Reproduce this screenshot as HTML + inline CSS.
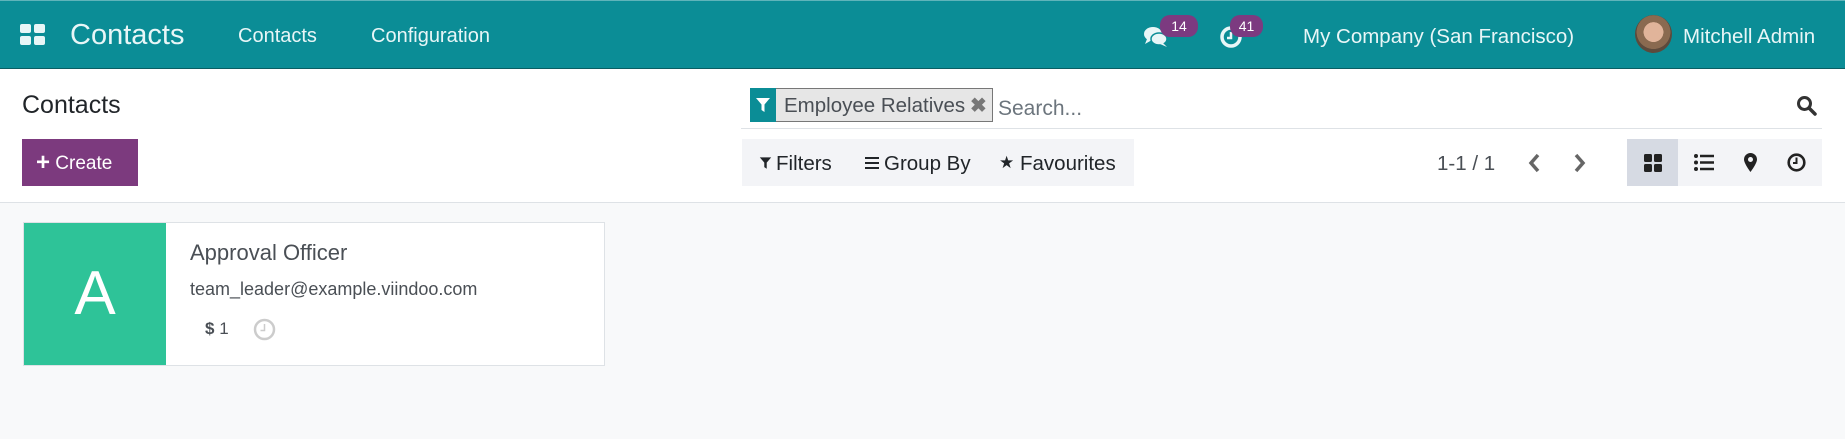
<!DOCTYPE html>
<html><head><meta charset="utf-8"><style>
*{box-sizing:border-box;margin:0;padding:0}
body{width:1845px;height:439px;overflow:hidden;background:#f8f9fa;font-family:"Liberation Sans",sans-serif;position:relative}
.a{position:absolute;white-space:nowrap}
.nav{left:0;top:0;width:1845px;height:69px;background:#0b8d96;border-top:1px solid #5fb4ba;border-bottom:1px solid #0a5e63}
.nt{color:#e8f6f7}
.cp{left:0;top:69px;width:1845px;height:134px;background:#fff;border-bottom:1px solid #dee2e6}
.badge{background:#7c3a80;color:#fff;font-size:14px;border-radius:10px;height:22px;line-height:22px;text-align:center}
</style></head><body>
<div class="a nav"></div>
<svg class="a" style="left:20px;top:24px" width="26" height="21" viewBox="0 0 26 21"><rect x="0" y="0" width="11" height="9" rx="2" fill="#e8f6f7"/><rect x="14" y="0" width="11" height="9" rx="2" fill="#e8f6f7"/><rect x="0" y="12" width="11" height="9" rx="2" fill="#e8f6f7"/><rect x="14" y="12" width="11" height="9" rx="2" fill="#e8f6f7"/></svg>
<div class="a nt" style="left:70px;top:19px;font-size:29px">Contacts</div>
<div class="a nt" style="left:238px;top:25px;font-size:20px">Contacts</div>
<div class="a nt" style="left:371px;top:25px;font-size:20px">Configuration</div>
<svg class="a" style="left:1143px;top:26px" width="26" height="22" viewBox="0 0 26 22"><ellipse cx="10" cy="8" rx="9" ry="7" fill="#e8f6f7"/><path d="M4 13 L2 18 L9 14Z" fill="#e8f6f7"/><ellipse cx="16" cy="13" rx="8" ry="6" fill="#e8f6f7" stroke="#0b8d96" stroke-width="1.5"/><path d="M20 17 L24 21 L17 18Z" fill="#e8f6f7"/></svg>
<div class="a badge" style="left:1160px;top:15px;width:38px">14</div>
<svg class="a" style="left:1219px;top:25px" width="24" height="24" viewBox="0 0 24 24"><circle cx="12" cy="12" r="9" fill="none" stroke="#e8f6f7" stroke-width="3.5"/><path d="M12 7v6h-4" stroke="#e8f6f7" stroke-width="2.5" fill="none"/></svg>
<div class="a badge" style="left:1230px;top:15px;width:33px">41</div>
<div class="a nt" style="left:1303px;top:25px;font-size:20.5px">My Company (San Francisco)</div>
<div class="a" style="left:1635px;top:15px;width:37px;height:38px;border-radius:50%;background:radial-gradient(circle at 50% 45%,#e1b49a 0 35%,#8a6a50 36% 60%,#5c4a3c 61%)"></div>
<div class="a nt" style="left:1683px;top:25px;font-size:20.5px">Mitchell Admin</div>

<div class="a cp"></div>
<div class="a" style="left:22px;top:91px;font-size:25px;color:#212529">Contacts</div>
<div class="a" style="left:22px;top:139px;width:116px;height:47px;background:#7c3a7e;color:#fff;font-size:19px;line-height:47px;padding-left:14px"><b style="font-size:24px;vertical-align:-1px">+</b> Create</div>

<div class="a" style="left:750px;top:88px;width:243px;height:34px;background:#e6e6e6;border:1px solid #777"></div>
<div class="a" style="left:750px;top:88px;width:26px;height:34px;background:#0b8d96"></div>
<svg class="a" style="left:755px;top:97px" width="16" height="16" viewBox="0 0 16 16"><path d="M1 1h14l-5.5 6.5v7.5l-3-2v-5.5z" fill="#fff"/></svg>
<div class="a" style="left:784px;top:94px;font-size:20.5px;color:#4a4f55">Employee Relatives</div>
<div class="a" style="left:970px;top:93px;font-size:20px;color:#777;font-weight:bold">✖</div>
<div class="a" style="left:998px;top:97px;font-size:21px;color:#6c757d">Search...</div>
<div class="a" style="left:741px;top:128px;width:1081px;height:1px;background:#dee2e6"></div>
<svg class="a" style="left:1796px;top:95px" width="21" height="21" viewBox="0 0 21 21"><circle cx="8.5" cy="8.5" r="6" fill="none" stroke="#333" stroke-width="3"/><path d="M13 13l6 6" stroke="#333" stroke-width="3.5" stroke-linecap="round"/></svg>

<div class="a" style="left:742px;top:139px;width:392px;height:47px;background:#f3f4f7"></div>
<svg class="a" style="left:759px;top:156px" width="13" height="14" viewBox="0 0 16 16"><path d="M1 1h14l-5.5 6.5v7.5l-3-2v-5.5z" fill="#212529"/></svg>
<div class="a" style="left:776px;top:152px;font-size:20.5px;color:#212529">Filters</div>
<svg class="a" style="left:865px;top:157px" width="14" height="12" viewBox="0 0 14 12"><path d="M0 1h14M0 6h14M0 11h14" stroke="#212529" stroke-width="2"/></svg>
<div class="a" style="left:884px;top:152px;font-size:20.5px;color:#212529">Group By</div>
<div class="a" style="left:999px;top:153px;font-size:17px;color:#212529">★</div>
<div class="a" style="left:1020px;top:152px;font-size:20.5px;color:#212529">Favourites</div>

<div class="a" style="left:1437px;top:152px;font-size:20.5px;color:#4a4f55">1-1 / 1</div>
<svg class="a" style="left:1527px;top:152px" width="14" height="22" viewBox="0 0 14 22"><path d="M11 3L4 11l7 8" fill="none" stroke="#666" stroke-width="3.5"/></svg>
<svg class="a" style="left:1573px;top:152px" width="14" height="22" viewBox="0 0 14 22"><path d="M3 3l7 8-7 8" fill="none" stroke="#666" stroke-width="3.5"/></svg>
<div class="a" style="left:1627px;top:139px;width:195px;height:47px;background:#f3f4f7"></div>
<div class="a" style="left:1627px;top:139px;width:51px;height:47px;background:#d6dae3"></div>
<svg class="a" style="left:1644px;top:154px" width="18" height="18" viewBox="0 0 18 18"><rect x="0" y="0" width="8" height="8" rx="1.5" fill="#222"/><rect x="10" y="0" width="8" height="8" rx="1.5" fill="#222"/><rect x="0" y="10" width="8" height="8" rx="1.5" fill="#222"/><rect x="10" y="10" width="8" height="8" rx="1.5" fill="#222"/></svg>
<svg class="a" style="left:1694px;top:154px" width="20" height="17" viewBox="0 0 20 17"><circle cx="2" cy="2" r="2" fill="#222"/><circle cx="2" cy="8.5" r="2" fill="#222"/><circle cx="2" cy="15" r="2" fill="#222"/><path d="M6 2h14M6 8.5h14M6 15h14" stroke="#222" stroke-width="2.5"/></svg>
<svg class="a" style="left:1744px;top:153px" width="13" height="19" viewBox="0 0 13 19"><path d="M6.5 0a6.5 6.5 0 0 0-6.5 6.5c0 4 6.5 12.5 6.5 12.5s6.5-8.5 6.5-12.5A6.5 6.5 0 0 0 6.5 0z" fill="#222"/><circle cx="6.5" cy="6.5" r="2.5" fill="#f3f4f7"/></svg>
<svg class="a" style="left:1787px;top:153px" width="19" height="19" viewBox="0 0 19 19"><circle cx="9.5" cy="9.5" r="7.8" fill="none" stroke="#222" stroke-width="2.6"/><path d="M9.5 4.5v5.5h-3.5" fill="none" stroke="#222" stroke-width="2"/></svg>

<div class="a" style="left:23px;top:222px;width:582px;height:144px;background:#fff;border:1px solid #dee2e6"></div>
<div class="a" style="left:24px;top:223px;width:142px;height:142px;background:#2ec398;color:#fff;font-size:62px;text-align:center;line-height:142px">A</div>
<div class="a" style="left:190px;top:240px;font-size:22px;color:#4a4f55">Approval Officer</div>
<div class="a" style="left:190px;top:279px;font-size:18px;color:#4a4f55">team_leader@example.viindoo.com</div>
<div class="a" style="left:205px;top:319px;font-size:17px;color:#4a4f55"><b>$</b> 1</div>
<svg class="a" style="left:253px;top:318px" width="23" height="23" viewBox="0 0 23 23"><circle cx="11.5" cy="11.5" r="9.5" fill="none" stroke="#ccc" stroke-width="2.5"/><path d="M11.5 6v6.5h-4" fill="none" stroke="#ccc" stroke-width="1.5"/></svg>
</body></html>
